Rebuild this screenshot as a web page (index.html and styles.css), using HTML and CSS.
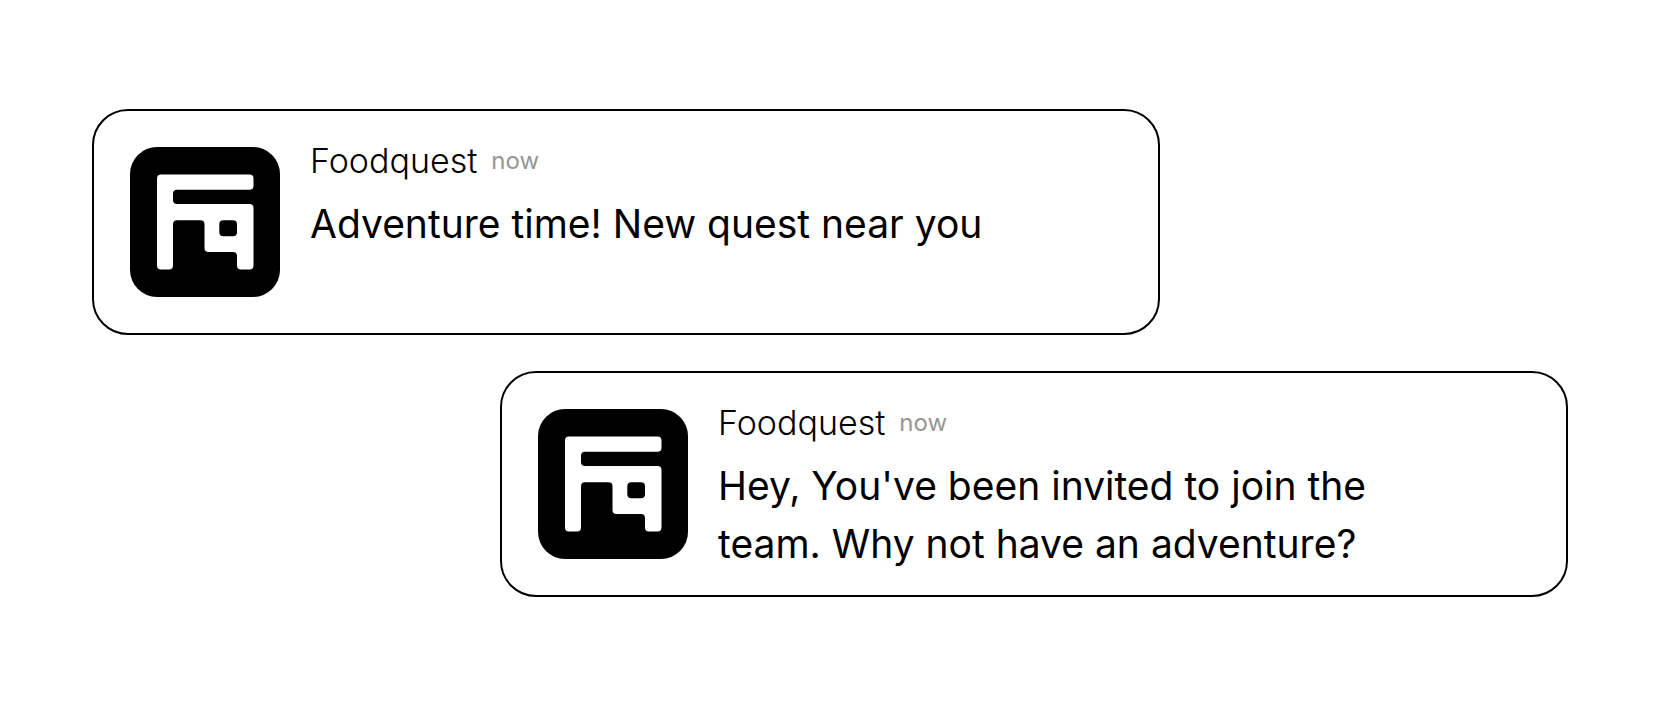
FILE: index.html
```html
<!DOCTYPE html>
<html lang="en">
<head>
    <meta charset="UTF-8">
    <meta name="viewport" content="width=device-width, initial-scale=1.0">
    <title>Foodquest</title>
    <link rel="stylesheet" href="styles.css">
</head>
<body>
    <!-- logo shape, shared by all notifications -->
    <svg class="symbols" aria-hidden="true">
        <symbol id="logo" viewBox="0 0 150 150">
            <rect width="150" height="150" rx="27"/>
            <path fill="#fff" fill-rule="evenodd" d="M31 27.500H119.500a4 4 0 0 1 4 4V38.700a4 4 0 0 1-4 4H47a4 4 0 0 0-4 4V53a4 4 0 0 0 4 4H119.500a4 4 0 0 1 4 4V118.500a4 4 0 0 1-4 4H111a4 4 0 0 1-4-4V109a4 4 0 0 0-4-4H78.500a4 4 0 0 1-4-4V77.300a4 4 0 0 0-4-4H47a4 4 0 0 0-4 4V118.500a4 4 0 0 1-4 4H31a4 4 0 0 1-4-4V31.500a4 4 0 0 1 4-4ZM93.300 73.300a4 4 0 0 0-4 4V85.300a4 4 0 0 0 4 4H103a4 4 0 0 0 4-4V77.300a4 4 0 0 0-4-4Z"/>
        </symbol>
    </svg>

    <main class="notifications">
        <article class="notification">
            <svg class="logo" role="img" aria-label="Foodquest logo"><use href="#logo"/></svg>
            <div class="content">
                <header class="heading">
                    <h2>Foodquest</h2>
                    <time>now</time>
                </header>
                <p>Adventure time! New quest near you</p>
            </div>
        </article>

        <article class="notification right">
            <svg class="logo" role="img" aria-label="Foodquest logo"><use href="#logo"/></svg>
            <div class="content">
                <header class="heading">
                    <h2>Foodquest</h2>
                    <time>now</time>
                </header>
                <p>Hey, You've been invited to join the team. Why not have an adventure?</p>
            </div>
        </article>
    </main>
</body>
</html>
```
FILE: styles.css
```css
* {
    box-sizing: border-box;
}
body {
    margin: 0;
    background-color: #fff;
    color: #000;
    font-family: Inter, "Liberation Sans", sans-serif;
}
.symbols {
    display: none;
}
.notifications {
    display: flex;
    flex-direction: column;
    justify-content: center;
    gap: 36px;
    max-width: 1660px;
    min-height: 100vh;
    margin: 0 auto;
    padding: 36px 92px;
}
.notification {
    display: flex;
    align-items: flex-start;
    gap: 30px;
    width: 100%;
    max-width: 1068px;
    min-height: 226px;
    padding: 36px 36px 20px;
    border: 2px solid #000;
    border-radius: 36px;
}
/* second message sits on the other side */
.notification.right {
    align-self: flex-end;
}
.logo {
    flex: none;
    width: 150px;
    height: 150px;
}
.content {
    flex: 1;
    max-width: 690px;
}
.heading {
    display: flex;
    align-items: center;
    gap: 14px;
    margin-bottom: 20px;
    line-height: 28px;
}
h2 {
    margin: 0;
    font-size: 34px;
    font-weight: 300;
}
time {
    color: #969696;
    font-size: 24px;
}
p {
    margin: 0;
    font-size: 39px;
    line-height: 58px;
}
```
